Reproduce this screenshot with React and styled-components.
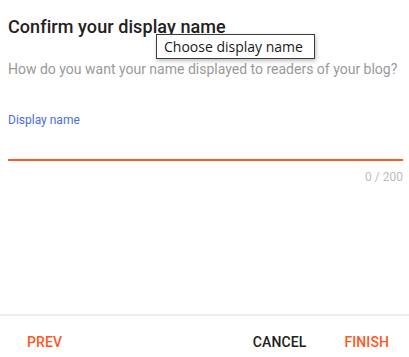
import React, { useState } from 'react';
import styled, { createGlobalStyle } from 'styled-components';

const GlobalStyle = createGlobalStyle`
    html, body {
        margin: 0;
        padding: 0;
        overflow: hidden;
        background: #ffffff;
    }
`

const Dialog = styled.div`
    position: relative;
    display: flex;
    flex-direction: column;
    height: 368px;
    font-family: Roboto, "Liberation Sans", sans-serif;
`

const Content = styled.div`
    flex: 1;
    padding: 15px 6px 0 8px;
`

const Title = styled.h2`
    margin: 0;
    font-size: 18px;
    line-height: 24px;
    font-weight: 500;
    letter-spacing: 0.08px;
    color: #212121;
`

const Subtitle = styled.p`
    margin: 20px 0 0;
    font-size: 14px;
    line-height: 20px;
    color: #999999;
`

const Field = styled.label`
    display: block;
    margin-top: 33px;
`

const Label = styled.span`
    display: block;
    font-size: 12px;
    line-height: 16px;
    color: #4a6ee0;
`

const Input = styled.input`
    display: block;
    box-sizing: border-box;
    width: 100%;
    height: 33px;
    padding: 0;
    border: 0;
    border-bottom: 2px solid #ff5722;
    outline: none;
    font-family: inherit;
    font-size: 16px;
    color: #212121;
    background: transparent;
`

const Counter = styled.div`
    margin-top: 8px;
    text-align: right;
    font-size: 12px;
    line-height: 16px;
    color: #bdbdbd;
`

const Footer = styled.div`
    display: flex;
    align-items: center;
    height: 52px;
    padding: 0 4px 0 11px;
    border-top: 2px solid #eeeeee;
`

const Spacer = styled.div`
    flex: 1;
`

const Button = styled.button`
    height: 36px;
    padding: 0 16px;
    margin-left: ${p => p.gap || 0}px;
    border: 0;
    background: none;
    font-family: Roboto, "Liberation Sans", sans-serif;
    font-size: 14px;
    font-weight: 500;
    letter-spacing: 0.1px;
    color: ${p => p.primary ? '#ff5722' : '#212121'};
    cursor: pointer;
`

const Tooltip = styled.div`
    position: absolute;
    left: 156px;
    top: 34px;
    box-sizing: border-box;
    width: 159px;
    height: 25px;
    padding: 0 7px;
    border: 1px solid #3c3c3c;
    background: #ffffff;
    box-shadow: 1px 2px 4px rgba(0, 0, 0, 0.25);
    font-family: "Open Sans", "DejaVu Sans", sans-serif;
    font-size: 14px;
    line-height: 23px;
    color: #1a1a1a;
    white-space: nowrap;
`

function App() {
    const [name, setName] = useState('');

    return (
        <Dialog>
            <GlobalStyle />
            <Content>
                <Title>Confirm your display name</Title>
                <Subtitle>How do you want your name displayed to readers of your blog?</Subtitle>
                <Field>
                    <Label>Display name</Label>
                    <Input
                        value={name}
                        maxLength={200}
                        onChange={(e) => setName(e.target.value)}
                    />
                </Field>
                <Counter>{name.length} / 200</Counter>
            </Content>
            <Footer>
                <Button primary>PREV</Button>
                <Spacer />
                <Button>CANCEL</Button>
                <Button primary gap={6}>FINISH</Button>
            </Footer>
            <Tooltip>Choose display name</Tooltip>
        </Dialog>
    )
}

export default App
